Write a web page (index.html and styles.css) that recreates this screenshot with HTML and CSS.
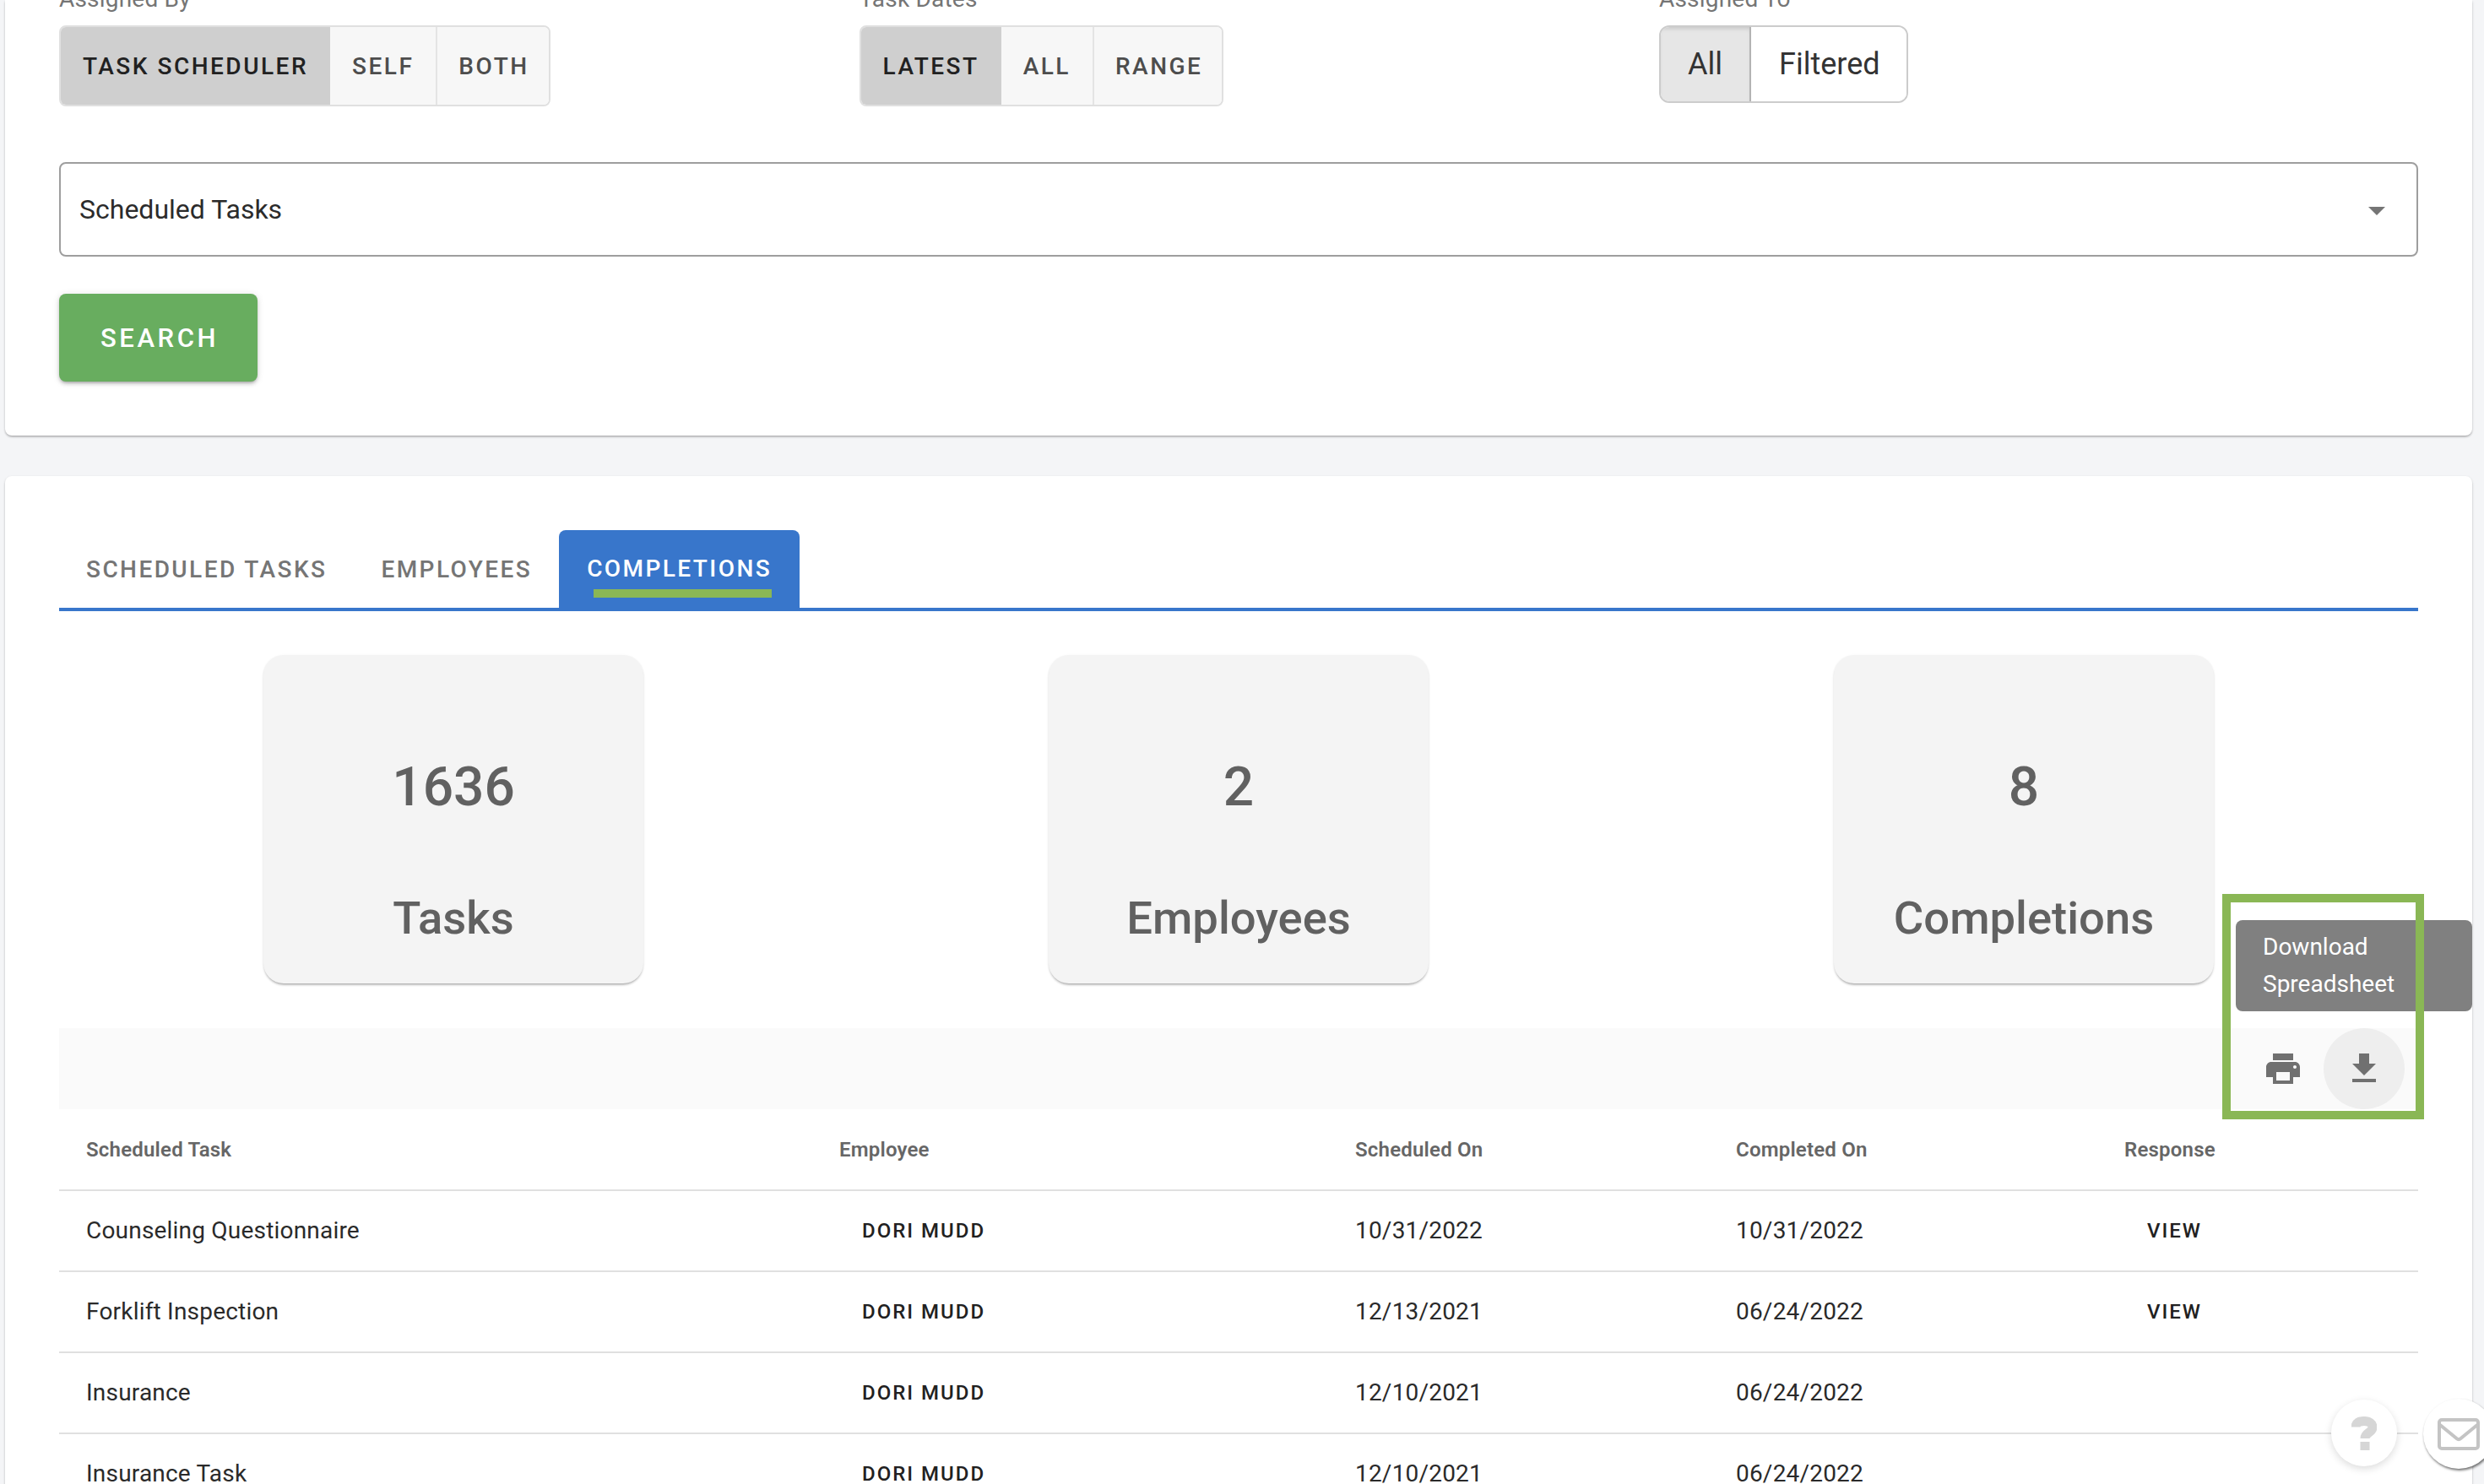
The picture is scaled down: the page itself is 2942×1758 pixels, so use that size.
FILE: index.html
```html
<!DOCTYPE html>
<html lang="en">
<head>
<meta charset="utf-8">
<title>Reports</title>
<link rel="stylesheet" href="styles.css">
</head>
<body>
<main class="page">
  <section class="card filters">
    <div class="filter-grid">
      <div class="filter">
        <div class="filter-label"><span>Assigned By</span></div>
        <div class="toggle">
          <button class="toggle-btn is-active">Task Scheduler</button>
          <button class="toggle-btn">Self</button>
          <button class="toggle-btn">Both</button>
        </div>
      </div>
      <div class="filter">
        <div class="filter-label"><span>Task Dates</span></div>
        <div class="toggle">
          <button class="toggle-btn is-active">Latest</button>
          <button class="toggle-btn">All</button>
          <button class="toggle-btn">Range</button>
        </div>
      </div>
      <div class="filter">
        <div class="filter-label"><span>Assigned To</span></div>
        <div class="plain-toggle">
          <button class="plain-btn is-active">All</button>
          <button class="plain-btn">Filtered</button>
        </div>
      </div>
    </div>
    <div class="select">
      <span>Scheduled Tasks</span>
      <svg class="caret" viewBox="0 0 20 10" aria-hidden="true"><path d="M0 0h20L10 10z"/></svg>
    </div>
    <button class="search-btn">Search</button>
  </section>

  <section class="card results">
    <nav class="tabs">
      <a class="tab">Scheduled Tasks</a>
      <a class="tab">Employees</a>
      <a class="tab is-active"><span class="tab-text">Completions</span></a>
    </nav>
    <div class="stats">
      <div class="stat"><div class="stat-num">1636</div><div class="stat-name">Tasks</div></div>
      <div class="stat"><div class="stat-num">2</div><div class="stat-name">Employees</div></div>
      <div class="stat"><div class="stat-num">8</div><div class="stat-name">Completions</div></div>
    </div>
    <div class="toolbar">
      <button class="icon-btn" aria-label="Print">
        <svg viewBox="0 0 24 24"><path d="M19 8H5c-1.66 0-3 1.34-3 3v6h4v4h12v-4h4v-6c0-1.66-1.34-3-3-3zm-3 11H8v-5h8v5zm3-7c-.55 0-1-.45-1-1s.45-1 1-1 1 .45 1 1-.45 1-1 1zm-1-9H6v4h12V3z"/></svg>
      </button>
      <button class="icon-btn is-hover" aria-label="Download Spreadsheet">
        <svg viewBox="0 0 24 24"><path d="M19 9h-4V3H9v6H5l7 7 7-7zM5 18v2h14v-2H5z"/></svg>
      </button>
    </div>
    <table class="table">
      <colgroup>
        <col class="col-task"><col class="col-emp"><col class="col-sched"><col class="col-comp"><col class="col-resp">
      </colgroup>
      <thead>
        <tr><th>Scheduled Task</th><th>Employee</th><th>Scheduled On</th><th>Completed On</th><th>Response</th></tr>
      </thead>
      <tbody>
        <tr><td>Counseling Questionnaire</td><td><span class="link">Dori Mudd</span></td><td>10/31/2022</td><td>10/31/2022</td><td><span class="link">View</span></td></tr>
        <tr><td>Forklift Inspection</td><td><span class="link">Dori Mudd</span></td><td>12/13/2021</td><td>06/24/2022</td><td><span class="link">View</span></td></tr>
        <tr><td>Insurance</td><td><span class="link">Dori Mudd</span></td><td>12/10/2021</td><td>06/24/2022</td><td></td></tr>
        <tr><td>Insurance Task</td><td><span class="link">Dori Mudd</span></td><td>12/10/2021</td><td>06/24/2022</td><td></td></tr>
      </tbody>
    </table>
  </section>
</main>

<div class="tooltip">Download<br>Spreadsheet</div>
<div class="highlight"></div>

<div class="fab fab-help">
  <svg viewBox="0 0 30 40" aria-hidden="true"><path class="help-arc" d="M5 12.5C5 7.5 9 5.500 15 5.500s10 2.800 10 7.300c0 6.500-9 6-9 13.200"/><rect class="help-dot" x="10.500" y="30" width="11" height="10"/></svg>
</div>
<div class="fab fab-mail">
  <svg viewBox="0 0 50 38" aria-hidden="true"><rect class="mail" x="2" y="2" width="46" height="34" rx="3"/><path class="mail" d="M3 8l19.500 16c1.500 1.300 3.500 1.300 5 0L47 8"/></svg>
</div>
</body>
</html>
```

FILE: styles.css
```css
* { box-sizing: border-box; }

html, body {
  margin: 0;
  height: 100%;
  overflow: hidden;
}

body {
  background: #f4f5f7;
  font-family: Roboto, "Liberation Sans", sans-serif;
  color: #212121;
}

button {
  font-family: inherit;
  border: 0;
  margin: 0;
}

.page {
  width: 2922px;
  margin-left: 6px;
}

.card {
  background: #fff;
  border-radius: 0 0 8px 8px;
  padding: 0 64px;
  box-shadow: 0 2px 3px -1px rgba(0,0,0,.3), 0 1px 3px rgba(0,0,0,.14);
}

.filters { height: 516px; }

.filter-grid {
  display: grid;
  grid-template-columns: repeat(3, 947.5px);
  height: 126px;
}

.filter-label {
  height: 30px;
  display: flex;
  align-items: flex-end;
  font-size: 28px;
  line-height: 40px;
  color: #757575;
}

.filter-label span { margin-bottom: 11px; letter-spacing: .2px; }

.toggle {
  display: inline-flex;
  height: 96px;
  border: 2px solid #e0e0e0;
  border-radius: 8px;
  overflow: hidden;
  vertical-align: top;
}

.toggle-btn {
  height: 92px;
  padding: 0 26px;
  background: #f7f7f7;
  border-right: 2px solid #e4e4e4;
  color: #4d4d4d;
  font-size: 28px;
  font-weight: 500;
  letter-spacing: 2.5px;
  text-transform: uppercase;
}

.toggle-btn:last-child {
  border-right: 0;
  padding: 0 23px 0 25px;
}

.toggle-btn.is-active {
  background: #cfcfcf;
  color: #212121;
  border-right: 0;
}

.plain-toggle {
  display: inline-flex;
  height: 92px;
  border: 2px solid #cccccc;
  border-radius: 12px;
  overflow: hidden;
  vertical-align: top;
}

.plain-btn {
  height: 88px;
  padding: 0 31px 0 33px;
  background: #fff;
  color: #333;
  font-size: 36px;
  font-weight: 400;
}

.plain-btn.is-active {
  background: #e6e6e6;
  box-shadow: inset 0 4px 5px -2px rgba(0,0,0,.14);
  padding: 0 32px;
  border-right: 2px solid #b3b3b3;
}

.select {
  margin-top: 66px;
  height: 112px;
  border: 2px solid #9e9e9e;
  border-radius: 8px;
  padding: 0 24px 0 22px;
  display: flex;
  align-items: center;
  justify-content: space-between;
  font-size: 32px;
  color: #2b2b2b;
}

.caret {
  width: 20px;
  height: 10px;
  margin-right: 13px;
  margin-top: 4px;
  fill: #757575;
}

.search-btn {
  display: block;
  margin-top: 44px;
  width: 235px;
  height: 104px;
  padding: 0 0 0 3px;
  background: #68ad5f;
  border-radius: 8px;
  color: #fff;
  font-size: 31px;
  font-weight: 500;
  letter-spacing: 3.6px;
  text-transform: uppercase;
  box-shadow: 0 3px 3px -2px rgba(0,0,0,.2), 0 3px 4px rgba(0,0,0,.14), 0 1px 8px rgba(0,0,0,.12);
}

.results {
  margin-top: 48px;
  padding-top: 64px;
  min-height: 1300px;
  border-radius: 8px;
}

.tabs {
  display: flex;
  height: 96px;
  border-bottom: 4px solid #3876cb;
}

.tab {
  height: 96px;
  padding: 0 32px 4px;
  display: flex;
  align-items: center;
  font-size: 28px;
  font-weight: 500;
  letter-spacing: 2.43px;
  text-transform: uppercase;
  color: #757575;
  white-space: nowrap;
}

.tab.is-active {
  background: #3876cb;
  color: #fff;
  border-radius: 8px 8px 0 0;
  padding: 0 33px 4px 33px;
}

.tab-text {
  position: relative;
  padding: 0 0 1px;
}

.tab-text::after {
  content: "";
  position: absolute;
  left: 8px;
  right: 0;
  top: 41px;
  height: 10px;
  background: #8ab755;
}

.stats {
  display: grid;
  grid-template-columns: repeat(3, 930px);
  margin-top: 52px;
  padding-left: 11px;
}

.stat {
  justify-self: start;
  width: 450px;
  height: 389px;
  margin-left: 231px;
  background: #f4f4f4;
  border-radius: 24px;
  box-shadow: 0 3px 3px -2px rgba(0,0,0,.32), 0 2px 3px rgba(0,0,0,.1), 0 0 3px rgba(0,0,0,.03);
  color: #616161;
  text-align: center;
  font-weight: 500;
  padding-top: 125px;
}

.stat-num {
  font-size: 64px;
  line-height: 64px;
}

.stat-name {
  margin-top: 91px;
  font-size: 54.4px;
  line-height: 64px;
}

.toolbar {
  margin-top: 53px;
  height: 96px;
  background: #fafafa;
  display: flex;
  justify-content: flex-end;
  padding-right: 16px;
}

.icon-btn {
  width: 96px;
  height: 96px;
  padding: 24px;
  border-radius: 50%;
  background: transparent;
}

.icon-btn svg {
  display: block;
  width: 48px;
  height: 48px;
  fill: #707070;
}

.icon-btn.is-hover { background: #eeeeee; }

.table {
  width: 2794px;
  table-layout: fixed;
  border-collapse: collapse;
}

.col-task { width: 892px; }
.col-emp { width: 611px; }
.col-sched { width: 451px; }
.col-comp { width: 460px; }
.col-resp { width: 380px; }

.table th,
.table td {
  height: 96px;
  padding: 0 0 2px 32px;
  text-align: left;
  border-bottom: 2px solid #e0e0e0;
  white-space: nowrap;
}

.table th {
  font-size: 24px;
  font-weight: 600;
  letter-spacing: .2px;
  color: #666;
  padding-bottom: 0;
}

.table td {
  font-size: 28px;
  letter-spacing: .2px;
  color: #2a2a2a;
}

.link {
  margin-left: 27px;
  font-size: 24px;
  font-weight: 500;
  letter-spacing: 2px;
  text-transform: uppercase;
  vertical-align: 1px;
  color: #212121;
}

.tooltip {
  position: absolute;
  left: 2648px;
  top: 1090px;
  width: 280px;
  height: 108px;
  padding: 10px 32px;
  background: #808080;
  border-radius: 8px;
  color: #fff;
  font-size: 28px;
  line-height: 44px;
}

.highlight {
  position: absolute;
  left: 2632px;
  top: 1059px;
  width: 239px;
  height: 267px;
  border: 10px solid #8ab755;
}

.fab {
  position: absolute;
  border-radius: 50%;
  background: #fff;
  display: flex;
  align-items: center;
  justify-content: center;
}

.fab-help {
  left: 2761px;
  top: 1658px;
  width: 78px;
  height: 79px;
  box-shadow: 0 3px 10px rgba(0,0,0,.14);
}

.fab-help svg { width: 30px; height: 40px; }

.help-arc {
  fill: none;
  stroke: #d6d6d6;
  stroke-width: 11;
}

.help-dot { fill: #d6d6d6; }

.fab-mail {
  left: 2870px;
  top: 1657px;
  width: 84px;
  height: 83px;
  box-shadow: 1px 2px 3px rgba(0,0,0,.55);
}

.fab-mail svg { width: 50px; height: 38px; margin-left: -1px; }

.mail {
  fill: none;
  stroke: #c4c4c4;
  stroke-width: 4;
}
```
